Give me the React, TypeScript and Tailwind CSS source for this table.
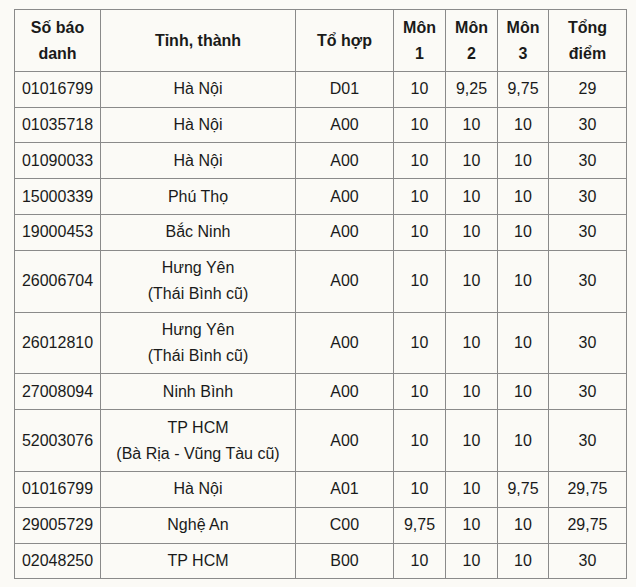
const rows: [string, string[], string, string, string, string, string][] = [
  ["01016799", ["Hà Nội"], "D01", "10", "9,25", "9,75", "29"],
  ["01035718", ["Hà Nội"], "A00", "10", "10", "10", "30"],
  ["01090033", ["Hà Nội"], "A00", "10", "10", "10", "30"],
  ["15000339", ["Phú Thọ"], "A00", "10", "10", "10", "30"],
  ["19000453", ["Bắc Ninh"], "A00", "10", "10", "10", "30"],
  ["26006704", ["Hưng Yên", "(Thái Bình cũ)"], "A00", "10", "10", "10", "30"],
  ["26012810", ["Hưng Yên", "(Thái Bình cũ)"], "A00", "10", "10", "10", "30"],
  ["27008094", ["Ninh Bình"], "A00", "10", "10", "10", "30"],
  ["52003076", ["TP HCM", "(Bà Rịa - Vũng Tàu cũ)"], "A00", "10", "10", "10", "30"],
  ["01016799", ["Hà Nội"], "A01", "10", "10", "9,75", "29,75"],
  ["29005729", ["Nghệ An"], "C00", "9,75", "10", "10", "29,75"],
  ["02048250", ["TP HCM"], "B00", "10", "10", "10", "30"],
];

const headers: string[][] = [
  ["Số báo", "danh"],
  ["Tỉnh, thành"],
  ["Tổ hợp"],
  ["Môn", "1"],
  ["Môn", "2"],
  ["Môn", "3"],
  ["Tổng", "điểm"],
];

const cell = "border border-[#8a8a8a] px-1 pt-[4.5px] pb-[4.3px] text-center align-middle";

function Lines({ lines }: { lines: string[] }) {
  return (
    <>
      {lines.map((l, i) => (
        <span key={i} className="block">
          {l}
        </span>
      ))}
    </>
  );
}

export default function App() {
  return (
    <div className="min-h-screen bg-[#fbfaf6] pl-[14px] pt-[9px] font-['Liberation_Sans',Arial,sans-serif] text-[16px] leading-[26px] text-[#1a1a1a]">
      <table className="w-[612px] table-fixed border-collapse">
        <colgroup>
          <col className="w-[86px]" />
          <col className="w-[195px]" />
          <col className="w-[98px]" />
          <col className="w-[52px]" />
          <col className="w-[52px]" />
          <col className="w-[51px]" />
          <col className="w-[78px]" />
        </colgroup>
        <thead>
          <tr>
            {headers.map((h, i) => (
              <th key={i} className={`${cell} font-bold`}>
                <Lines lines={h} />
              </th>
            ))}
          </tr>
        </thead>
        <tbody>
          {rows.map((r, i) => (
            <tr key={i}>
              <td className={cell}>{r[0]}</td>
              <td className={cell}>
                <Lines lines={r[1]} />
              </td>
              <td className={cell}>{r[2]}</td>
              <td className={cell}>{r[3]}</td>
              <td className={cell}>{r[4]}</td>
              <td className={cell}>{r[5]}</td>
              <td className={cell}>{r[6]}</td>
            </tr>
          ))}
        </tbody>
      </table>
    </div>
  );
}
